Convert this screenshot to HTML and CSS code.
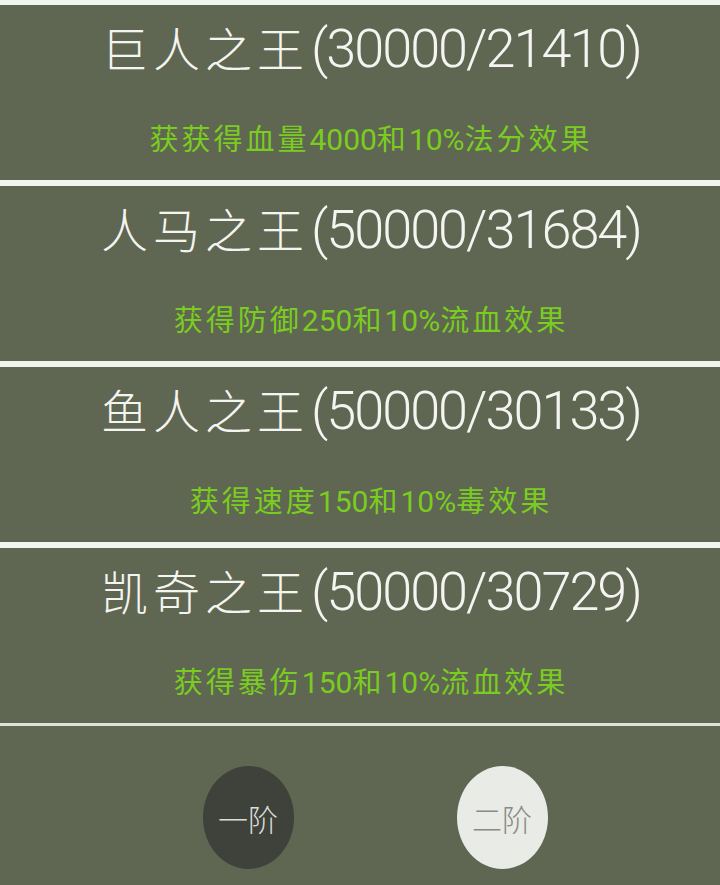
FILE: index.html
```html
<!DOCTYPE html>
<html lang="zh-CN">
<head>
  <meta charset="UTF-8" />
  <meta name="viewport" content="width=device-width, initial-scale=1" />
  <title>王者挑战</title>
  <link rel="stylesheet" href="styles.css">
</head>
<body>
  <div class="boss-list">
    <div class="boss-card">
      <div class="boss-name">巨人之王<span class="boss-hp">(30000/21410)</span></div>
      <div class="boss-reward">获获得血量<span class="num">4000</span>和<span class="num">10%</span>法分效果</div>
    </div>
    <div class="boss-card">
      <div class="boss-name">人马之王<span class="boss-hp">(50000/31684)</span></div>
      <div class="boss-reward">获得防御<span class="num">250</span>和<span class="num">10%</span>流血效果</div>
    </div>
    <div class="boss-card">
      <div class="boss-name">鱼人之王<span class="boss-hp">(50000/30133)</span></div>
      <div class="boss-reward">获得速度<span class="num">150</span>和<span class="num">10%</span>毒效果</div>
    </div>
    <div class="boss-card">
      <div class="boss-name">凯奇之王<span class="boss-hp">(50000/30729)</span></div>
      <div class="boss-reward">获得暴伤<span class="num">150</span>和<span class="num">10%</span>流血效果</div>
    </div>
  </div>

  <div class="stage-bar">
    <button class="stage-btn active">一阶</button>
    <button class="stage-btn">二阶</button>
  </div>
</body>
</html>
```

FILE: styles.css
```css
body {
  margin: 0;
  background: #f2f4ee;
  font-family: "Noto Sans CJK SC", "Noto Sans", sans-serif;
  height: 885px;
  overflow: hidden;
}

.boss-list {
  display: flex;
  flex-direction: column;
  gap: 6px;
  padding-top: 5px;
}

.boss-card {
  height: 175px;
  box-sizing: border-box;
  background: #5f6652;
  display: flex;
  flex-direction: column;
  align-items: center;
  padding: 12px 0 0 22px;
}

.boss-name {
  color: #f4f4f0;
  font-size: 47px;
  font-weight: 300;
  line-height: 60px;
  letter-spacing: 5px;
  white-space: nowrap;
}

.boss-hp {
  font-family: Roboto, "Liberation Sans", sans-serif;
  font-size: 54px;
  font-weight: 300;
  letter-spacing: -2px;
  margin-left: 2px;
}

.boss-reward {
  margin-top: 38px;
  color: #7acd20;
  font-size: 29px;
  line-height: 40px;
  letter-spacing: 3px;
  white-space: nowrap;
}

.boss-reward .num {
  font-family: Roboto, "Liberation Sans", sans-serif;
  font-size: 30px;
  letter-spacing: 0;
}

.stage-bar {
  border-top: 3px solid #dde1d6;
  background: #5f6652;
  height: 162px;
  box-sizing: border-box;
  display: flex;
  justify-content: center;
  align-items: flex-start;
  gap: 163px;
  padding: 40px 0 0 30px;
}

.stage-btn {
  width: 91px;
  height: 103px;
  border: none;
  border-radius: 50%;
  background: #e9ebe7;
  color: #8a8a86;
  font-family: "Noto Sans CJK SC", sans-serif;
  font-size: 30px;
  font-weight: 300;
  padding: 0;
  cursor: pointer;
}

.stage-btn.active {
  background: #3e423a;
  color: #dcdcd8;
}
```
